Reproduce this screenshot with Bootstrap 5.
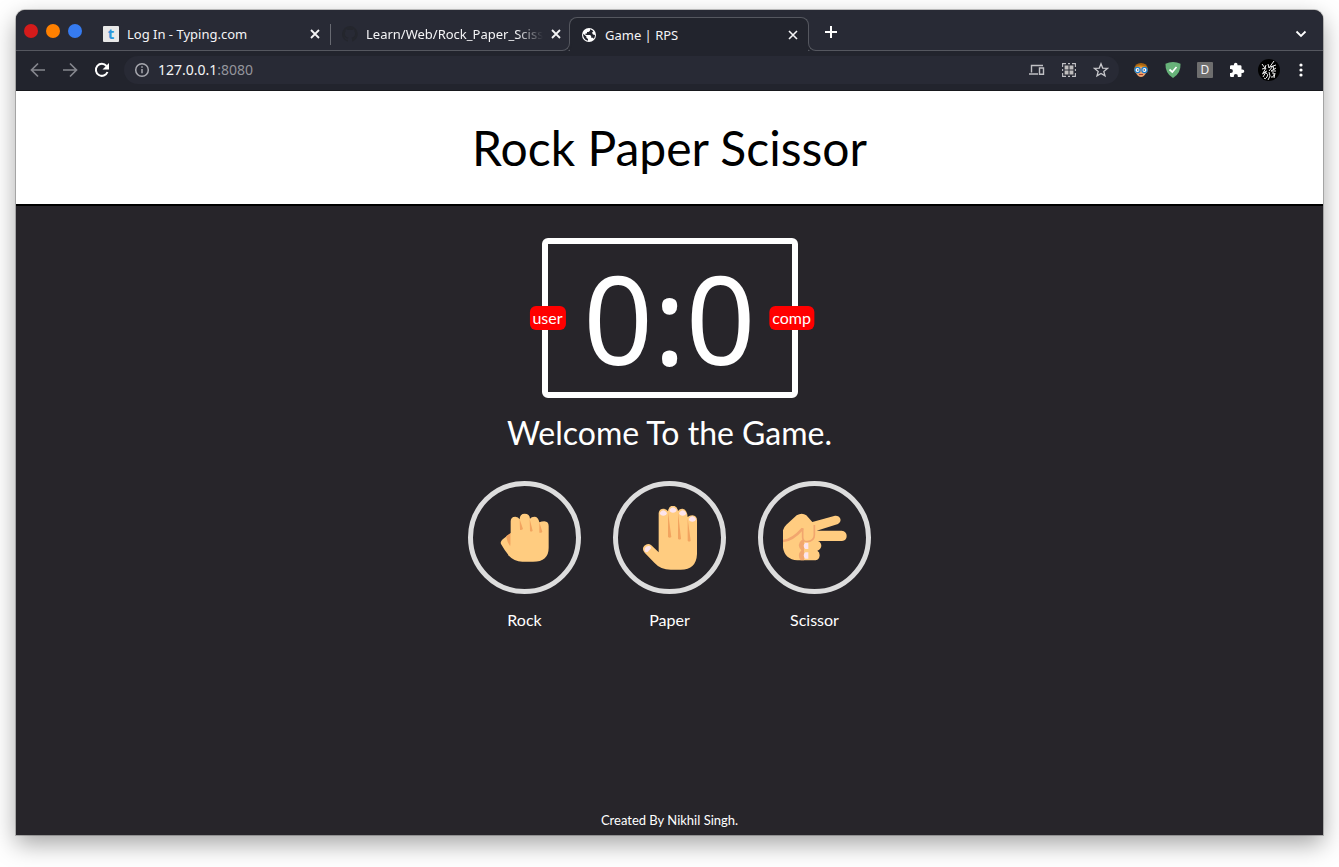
<!DOCTYPE html>
<html lang="en">
<head>
<meta charset="utf-8">
<meta name="viewport" content="width=device-width, initial-scale=1">
<title>Game | RPS</title>
<link href="https://cdn.jsdelivr.net/npm/bootstrap@5.3.0/dist/css/bootstrap.min.css" rel="stylesheet">
<style>
  :root { --strip: #282a35; --bar: #22242d; --line: #55575f; --board: #27252a; }
  body { background: #fff; font-family: "Noto Sans", sans-serif; font-size: 13px; color: #f4f4f6; }
  button { background: none; border: 0; padding: 0; color: inherit; }
  svg { display: block; flex: none; }
  .desk { min-height: 100vh; padding: 10px 16px 32px; }
  .app-window { border-radius: 9px 9px 0 0; background: var(--board); box-shadow: 0 0 0 1px rgba(0,0,0,.22), 0 9px 24px rgba(0,0,0,.36); }
  .tab-strip { height: 41px; background: var(--strip); border-bottom: 1px solid var(--line); border-radius: 9px 9px 0 0; padding: 0 13px 0 8px; }
  .lights { gap: 8px; height: 42px; width: 67px; }
  .lights button { width: 14px; height: 14px; border-radius: 50%; }
  .browser-tab { width: 239px; height: 33px; gap: 8px; padding: 0 10px 0 12px; line-height: 18px; position: relative; min-width: 0; }
  .browser-tab a { color: inherit; text-decoration: none; flex: 1; white-space: nowrap; }
  .tab-split::after { content: ""; position: absolute; right: -1px; top: 7px; width: 1px; height: 21px; background: #686a72; }
  .fade-end { -webkit-mask-image: linear-gradient(90deg, #000 85%, transparent); mask-image: linear-gradient(90deg, #000 85%, transparent); }
  .tab-open { width: 240px; height: 34px; padding: 0 10px 0 11px; background: var(--bar); border: 1px solid var(--line); border-bottom: 0; border-radius: 8px 8px 0 0; margin-bottom: -1px; }
  .tab-open::before, .tab-open::after { content: ""; position: absolute; bottom: 0; width: 9px; height: 9px; background: var(--strip); border-bottom: 1px solid var(--line); }
  .tab-open::before { left: -9px; border-right: 1px solid var(--line); border-bottom-right-radius: 8px; box-shadow: 2px 1px 0 var(--bar); }
  .tab-open::after { right: -9px; border-left: 1px solid var(--line); border-bottom-left-radius: 8px; box-shadow: -2px 1px 0 var(--bar); }
  .type-icon { width: 16px; height: 16px; background: #e8e8e8; color: #2d96dc; border-radius: 1px; font-weight: 700; font-size: 15px; line-height: 14px; text-align: center; }
  .tool-bar { height: 40px; background: var(--bar); border-bottom: 1px solid #17181d; padding: 0 12px 1px; }
  .address { height: 28px; border-radius: 14px; background: var(--strip); padding: 0 8px; margin-left: 12px; }
  .url-text { font-size: 14px; line-height: 20px; margin-left: 6px; }
  .url-text span { color: #94959c; }
  .tool-set { gap: 12px; }
  .extensions { padding-left: 12px; }
  .tool { width: 20px; height: 20px; display: flex; align-items: center; justify-content: center; }
  .d-mark { width: 16px; height: 16px; background: #6e6e6e; font-size: 12px; line-height: 16px; text-align: center; border-radius: 1px; }

  .page { flex: 1; font-family: Lato, sans-serif; font-size: 16px; color: #fff; }
  .page-head { background: #fff; color: #000; height: 115px; border-bottom: 2px solid #000; }
  .page-head h1 { font-size: 48px; line-height: 56px; font-weight: 400; margin: 0; }
  .score { width: 256px; height: 160px; border: 6px solid #fff; border-radius: 6px; margin-top: 32px; position: relative; font-size: 122px; line-height: 148px; font-family: "Noto Sans", sans-serif; }
  .who { position: absolute; top: 50%; background: red; border-radius: 6px; font-family: Lato, sans-serif; font-size: 16px; line-height: 24px; padding: 0 3px; }
  .who-user { left: 0; transform: translate(-50%, -50%); }
  .who-comp { right: 0; transform: translate(50%, -50%); }
  .status { font-size: 32px; line-height: 38px; margin: 16px 0 29px; }
  .choices { gap: 32px; }
  .choice { width: 113px; }
  .choice .ring { height: 113px; border: 5px solid #ddd; border-radius: 50%; margin-bottom: 14px; }
  .credit { font-size: 13px; line-height: 18px; padding-bottom: 6px; }
</style>
</head>
<body>
<div class="desk d-flex">
<div class="app-window d-flex flex-column flex-fill">
  <div class="tab-strip d-flex">
    <div class="lights d-flex align-items-center">
      <button aria-label="Close window" style="background:#d41b1b"></button>
      <button aria-label="Minimise window" style="background:#ff8000"></button>
      <button aria-label="Maximise window" style="background:#367bf0"></button>
    </div>
    <nav class="d-flex align-items-end flex-fill" aria-label="Tabs">
      <div class="browser-tab tab-split d-flex align-items-center">
        <span class="type-icon" aria-hidden="true">t</span>
        <a href="#">Log In - Typing.com</a>
        <button aria-label="Close tab"><svg width="10" height="10" viewBox="0 0 10 10" stroke="#f4f4f6" stroke-width="1.8"><path d="M1 1l8 8M9 1L1 9"/></svg></button>
      </div>
      <div class="browser-tab d-flex align-items-center">
        <svg width="16" height="16" viewBox="0 0 16 16" fill="#24262d"><path d="M8 0a8 8 0 0 0-2.5 15.6c.4.1.5-.2.5-.4v-1.5c-2.2.5-2.7-1-2.7-1-.4-.9-.9-1.2-.9-1.2-.7-.5.1-.5.1-.5.8.1 1.2.8 1.2.8.7 1.2 1.9.9 2.3.7.1-.5.3-.9.5-1.1-1.8-.2-3.6-.9-3.6-4 0-.9.3-1.6.8-2.1-.1-.2-.4-1 .1-2.1 0 0 .7-.2 2.2.8a7.500 7.500 0 0 1 4 0c1.500-1 2.200-.8 2.200-.8.4 1.100.2 1.900.1 2.100.5.6.8 1.300.8 2.100 0 3.100-1.900 3.800-3.700 4 .3.3.6.8.6 1.500v2.200c0 .2.100.5.500.4A8 8 0 0 0 8 0z"/></svg>
        <a href="#" class="fade-end">Learn/Web/Rock_Paper_Sciss</a>
        <button aria-label="Close tab"><svg width="10" height="10" viewBox="0 0 10 10" stroke="#f4f4f6" stroke-width="1.8"><path d="M1 1l8 8M9 1L1 9"/></svg></button>
      </div>
      <div class="browser-tab tab-open d-flex align-items-center">
        <svg width="16" height="16" viewBox="0 0 16 16"><circle cx="8" cy="8" r="7" fill="#fff"/><path d="M2.200 6.800L5.400 9.400V10.800L7 12v1.800A6 6 0 0 1 2.200 6.800zM9 2.200v1.600L7.600 5H6v1.600H4.500V8h4.700l1 1.200v1.600h1.600l1 1A6 6 0 0 0 14 8l-2-.4-1-1.800 1.400-1.600A6 6 0 0 0 9 2.200z" fill="#22242d"/></svg>
        <a href="#" aria-current="page">Game | RPS</a>
        <button aria-label="Close tab"><svg width="10" height="10" viewBox="0 0 10 10" stroke="#f4f4f6" stroke-width="1.600"><path d="M1 1l8 8M9 1L1 9"/></svg></button>
      </div>
      <button class="ms-3 mb-2 pb-1" aria-label="New tab"><svg width="12" height="12" viewBox="0 0 12 12" stroke="#fff" stroke-width="2"><path d="M6 0v12M0 6h12"/></svg></button>
      <button class="ms-auto mb-2 pb-1" aria-label="Search tabs"><svg width="18" height="10" viewBox="0 0 18 10" fill="none" stroke="#fff" stroke-width="1.800"><path d="M4.500 3.500L9 8l4.500-4.500"/></svg></button>
    </nav>
  </div>
  <div class="tool-bar d-flex align-items-center">
    <div class="tool-set d-flex">
      <button class="tool" aria-label="Back"><svg width="16" height="16" viewBox="0 0 16 16" fill="none" stroke="#85868d" stroke-width="1.700"><path d="M15 8H2M8 1.500L1.500 8 8 14.500"/></svg></button>
      <button class="tool" aria-label="Forward"><svg width="16" height="16" viewBox="0 0 16 16" fill="none" stroke="#85868d" stroke-width="1.700"><path d="M1 8h13M8 1.500L14.500 8 8 14.500"/></svg></button>
      <button class="tool" aria-label="Reload"><svg width="16" height="16" viewBox="0 0 16 16"><path d="M13.500 10A6 6 0 1 1 12.500 4" fill="none" stroke="#fff" stroke-width="2"/><path d="M15 1v6.500H8.500z" fill="#fff"/></svg></button>
    </div>
    <div class="address d-flex align-items-center flex-fill">
      <svg width="20" height="20" viewBox="0 0 20 20" fill="none" stroke="#a7a8af" stroke-width="1.500"><circle cx="10" cy="10" r="6.300"/><path d="M10 9v4.200M10 6.300v1.500"/></svg>
      <a href="#" class="url-text text-reset text-decoration-none">127.0.0.1<span>:8080</span></a>
      <div class="tool-set d-flex ms-auto">
        <button class="tool" aria-label="Send to device"><svg width="16" height="12" viewBox="0 0 16 12" fill="none" stroke="#c0c0c4" stroke-width="1.400"><path d="M14 1.500H2.500v7M0 10h9M10.500 4h4v6.300h-4z"/></svg></button>
        <button class="tool" aria-label="QR code"><svg width="14" height="14" viewBox="0 0 14 14"><path d="M.6 4V.6H4M10 .6h3.400V4M13.400 10v3.400H10M4 13.400H.6V10M.6 6v2M13.400 6v2M6 .6h2M6 13.400h2" fill="none" stroke="#c0c0c4" stroke-width="1.100"/><path d="M2.600 2.600h3.900v3.900H2.600zM7.500 2.600h3.900v3.900H7.500zM2.600 7.500h3.900v3.900H2.600zM7.500 7.500h3.900v3.900H7.500z" fill="#c0bebe"/></svg></button>
        <button class="tool" aria-label="Bookmark"><svg width="16" height="16" viewBox="0 0 16 16" fill="none" stroke="#c8c8cc" stroke-width="1.300"><path d="M8 1.800l1.700 4.300 4.700.3-3.600 3 1.200 4.500-4-2.500-4 2.500 1.200-4.500-3.600-3 4.700-.3z"/></svg></button>
      </div>
    </div>
    <div class="tool-set extensions d-flex">
      <button class="tool" aria-label="Profile extension"><svg width="16" height="16" viewBox="0 0 16 16"><path d="M1 7Q2 1 8 1t7 6l-1 4H2z" fill="#a96512"/><path d="M3 5q5-2 10 0v6q-2 4-5 4t-5-4z" fill="#e9a36e"/><path d="M3 5.500Q6 2.500 13 5.500" stroke="#d98a1c" stroke-width="1.500" fill="none"/><path d="M6 12.500h4" stroke="#a33d30"/><g fill="#fff" stroke="#1a7ed0" stroke-width="1.300"><circle cx="4.500" cy="8" r="2.600"/><circle cx="11.500" cy="8" r="2.600"/></g><circle cx="4.800" cy="8" r=".8" fill="#234"/><circle cx="11.200" cy="8" r=".8" fill="#234"/></svg></button>
      <button class="tool" aria-label="Ad blocker"><svg width="16" height="16" viewBox="0 0 16 16"><path d="M8 0q4 .2 7.500 1.800Q16 11.500 8 16 0 11.500.5 1.800 4 .2 8 0z" fill="#67b279"/><path d="M4.500 7.500L7.300 10l4.200-5" fill="none" stroke="#fff" stroke-width="1.700"/></svg></button>
      <button class="tool" aria-label="Dictionary"><span class="d-mark">D</span></button>
      <button class="tool" aria-label="Extensions"><svg width="16" height="16" viewBox="0 0 16 16" fill="#fff"><path d="M13.500 7.500h-1V4.500a1.300 1.300 0 0 0-1.300-1.300H8.500V2.500a1.800 1.800 0 0 0-3.600 0v.7H2.300A1.300 1.300 0 0 0 1 4.500V7h.9a2 2 0 0 1 0 4H1v2.700A1.300 1.300 0 0 0 2.300 15h2.500v-.9a2 2 0 0 1 4 0v.9h2.400a1.300 1.300 0 0 0 1.300-1.300v-2.600h1a1.800 1.800 0 0 0 0-3.600z"/></svg></button>
      <button class="tool" aria-label="Account"><svg width="22" height="22" viewBox="0 0 22 22"><circle cx="11" cy="11" r="11" fill="#000"/><path d="M4 5l3 4 1-3M4 10l4-1-3 5 4-2M10 5l1 4 5-7M12 8l6-2M11 12l4-5 1 4M18 9l-5 3 5 0M4 15l4-2-3 5M8 14q3 1 1 4t-3 1M11 13l1 4-2 4M14 14q3-1 2 2t-3 2M17 14l-1 5" fill="none" stroke="#eee" stroke-width="1"/></svg></button>
      <button class="tool" aria-label="Menu"><svg width="4" height="14" viewBox="0 0 4 14" fill="#fff"><circle cx="2" cy="2" r="1.600"/><circle cx="2" cy="7" r="1.600"/><circle cx="2" cy="12" r="1.600"/></svg></button>
    </div>
  </div>

  <div class="page d-flex flex-column">
    <header class="page-head d-flex align-items-center justify-content-center"><h1>Rock Paper Scissor</h1></header>
    <main class="d-flex flex-column align-items-center">
      <div class="score text-center">
        <span class="who who-user">user</span>0:0<span class="who who-comp">comp</span>
      </div>
      <p class="status">Welcome To the Game.</p>
      <div class="choices d-flex">
        <button class="choice">
          <span class="ring d-flex align-items-center justify-content-center">
            <svg width="64" height="64" viewBox="100 106 192 192"><path d="M155 186L134 202Q120 212 124 220 135 240 148 255L165 250z" fill="#ffcc80"/><path d="M153 187l-14 10q4 20 14 31z" fill="#f2a45f"/><path d="M153 152Q153 138 167 138 176 138 180 146 180 129 195 129 210 129 211 144 215 138 224 138 236 138 239 155 246 152 254 152 267 153 267 166V231Q267 273 220 273H188Q163 273 146 254L153 220z" fill="#ffcc80"/><path d="M180 146l1 31q4 2 9-2zM210 144l1 37q4 4 8-1zM239 155l0 31q5 2 9-3z" fill="#f2a45f"/></svg>
          </span>Rock
        </button>
        <button class="choice">
          <span class="ring d-flex align-items-center justify-content-center">
            <svg width="64" height="64" viewBox="-68 106 192 192"><path d="M-6 127Q-4 114 8 114 18 114 22 122 24 105 37 105 50 106 52 121 56 114 66 114 79 116 81 139 86 134 95 134 109 136 109 149V250Q107 297 60 297H30Q0 297-19 276L-48 246Q-58 235-49 225-38 216-28 224L-6 245z" fill="#ffcc80"/><path d="M22 124v75q5 5 10 0zM52 124v80q5 5 9 0zM81 142v68q5 5 9 0z" fill="#f2a45f"/><g fill="#fce4ec"><path d="M-3 127q11-17 22 0-2 8-11 8t-11-8zM26 118q11-17 22 0-2 8-11 8t-11-8zM55 127q11-17 22 0-2 8-11 8t-11-8zM84 145q11-16 22 0-2 8-11 8t-11-8z"/><path d="M-48 234q3-10 14-8 8 4 4 8l-9 10q-5 3-9-3z"/></g></svg>
          </span>Paper
        </button>
        <button class="choice">
          <span class="ring d-flex align-items-center justify-content-center">
            <svg width="64" height="64" viewBox="367 106 192 192"><path d="M366 188Q366 172 377 162L408 134Q424 124 437 134L455 154 523 135Q535 134 539 144 542 156 532 160L468 180H543Q558 182 558 196 558 210 544 211H472Q482 215 482 226 480 237 470 240 477 244 477 254 476 267 465 269H410Q366 266 366 218z" fill="#ffcc80"/><path d="M367 211Q394 210 426 174" fill="none" stroke="#f2a66e" stroke-width="8"/><path d="M426 172v28q1 14 14 13 21-2 21-20v-30" fill="none" stroke="#f2a66e" stroke-width="5"/><path d="M424 207q-18 14-2 32-14 14-2 30h10V207z" fill="#f2a66e"/><path d="M434 216q-10 9 0 19h9v-19zM434 245q-10 9 0 19h9v-19z" fill="#fce4ec"/></svg>
          </span>Scissor
        </button>
      </div>
    </main>
    <footer class="credit text-center mt-auto">Created By Nikhil Singh.</footer>
  </div>
</div>
</div>
<script src="https://cdn.jsdelivr.net/npm/bootstrap@5.3.0/dist/js/bootstrap.bundle.min.js"></script>
</body>
</html>
